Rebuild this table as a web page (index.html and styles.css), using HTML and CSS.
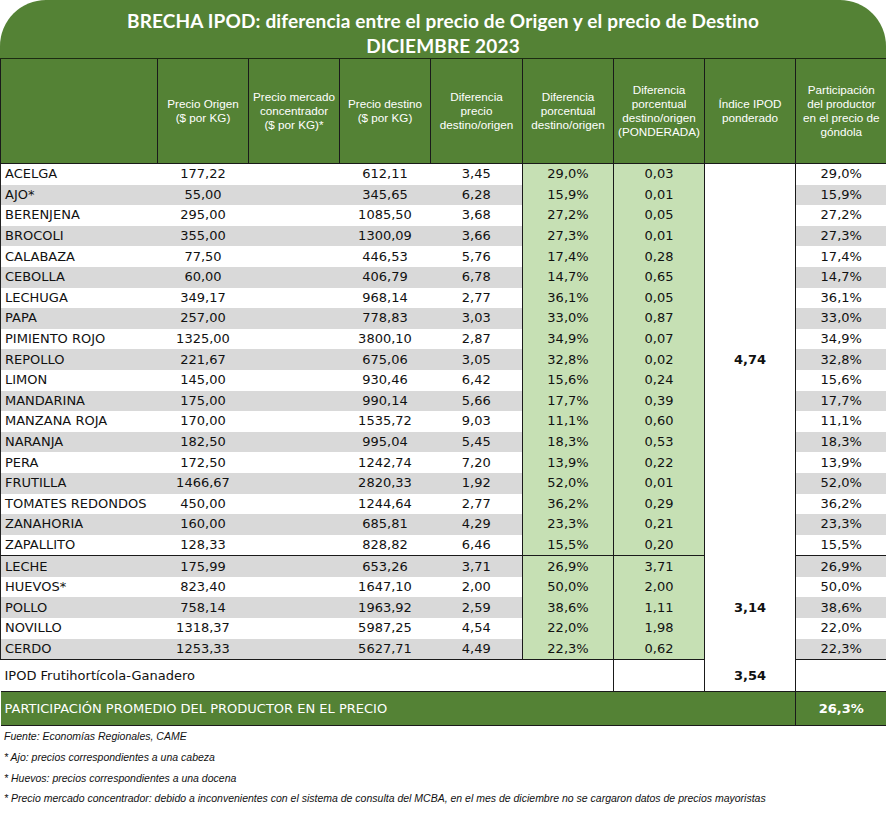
FILE: index.html
```html
<!DOCTYPE html>
<html lang="es">
<head>
<meta charset="utf-8">
<title>Brecha IPOD</title>
<link rel="stylesheet" href="styles.css">
</head>
<body>
<div class="sheet">
  <div class="title">
    <div>BRECHA IPOD: diferencia entre el precio de Origen y el precio de Destino</div>
    <div>DICIEMBRE 2023</div>
  </div>
  <table class="grid">
    <colgroup>
      <col class="c-name"><col class="c-n"><col class="c-n"><col class="c-n"><col class="c-w"><col class="c-n"><col class="c-n"><col class="c-n"><col class="c-n">
    </colgroup>
    <thead>
      <tr>
        <th class="first"></th>
        <th>Precio Origen<br>($ por KG)</th>
        <th>Precio mercado<br>concentrador<br>($ por KG)*</th>
        <th>Precio destino<br>($ por KG)</th>
        <th>Diferencia<br>precio<br>destino/origen</th>
        <th>Diferencia<br>porcentual<br>destino/origen</th>
        <th>Diferencia<br>porcentual<br>destino/origen<br>(PONDERADA)</th>
        <th>Índice IPOD<br>ponderado</th>
        <th>Participación<br>del productor<br>en el precio de<br>góndola</th>
      </tr>
    </thead>
    <tbody>
      <tr><td class="name">ACELGA</td><td>177,22</td><td></td><td>612,11</td><td>3,45</td><td class="g bl">29,0%</td><td class="g bl">0,03</td><td class="m bl" rowspan="19">4,74</td><td class="bl">29,0%</td></tr>
      <tr class="alt"><td class="name">AJO*</td><td>55,00</td><td></td><td>345,65</td><td>6,28</td><td class="g bl">15,9%</td><td class="g bl">0,01</td><td class="bl">15,9%</td></tr>
      <tr><td class="name">BERENJENA</td><td>295,00</td><td></td><td>1085,50</td><td>3,68</td><td class="g bl">27,2%</td><td class="g bl">0,05</td><td class="bl">27,2%</td></tr>
      <tr class="alt"><td class="name">BROCOLI</td><td>355,00</td><td></td><td>1300,09</td><td>3,66</td><td class="g bl">27,3%</td><td class="g bl">0,01</td><td class="bl">27,3%</td></tr>
      <tr><td class="name">CALABAZA</td><td>77,50</td><td></td><td>446,53</td><td>5,76</td><td class="g bl">17,4%</td><td class="g bl">0,28</td><td class="bl">17,4%</td></tr>
      <tr class="alt"><td class="name">CEBOLLA</td><td>60,00</td><td></td><td>406,79</td><td>6,78</td><td class="g bl">14,7%</td><td class="g bl">0,65</td><td class="bl">14,7%</td></tr>
      <tr><td class="name">LECHUGA</td><td>349,17</td><td></td><td>968,14</td><td>2,77</td><td class="g bl">36,1%</td><td class="g bl">0,05</td><td class="bl">36,1%</td></tr>
      <tr class="alt"><td class="name">PAPA</td><td>257,00</td><td></td><td>778,83</td><td>3,03</td><td class="g bl">33,0%</td><td class="g bl">0,87</td><td class="bl">33,0%</td></tr>
      <tr><td class="name">PIMIENTO ROJO</td><td>1325,00</td><td></td><td>3800,10</td><td>2,87</td><td class="g bl">34,9%</td><td class="g bl">0,07</td><td class="bl">34,9%</td></tr>
      <tr class="alt"><td class="name">REPOLLO</td><td>221,67</td><td></td><td>675,06</td><td>3,05</td><td class="g bl">32,8%</td><td class="g bl">0,02</td><td class="bl">32,8%</td></tr>
      <tr><td class="name">LIMON</td><td>145,00</td><td></td><td>930,46</td><td>6,42</td><td class="g bl">15,6%</td><td class="g bl">0,24</td><td class="bl">15,6%</td></tr>
      <tr class="alt"><td class="name">MANDARINA</td><td>175,00</td><td></td><td>990,14</td><td>5,66</td><td class="g bl">17,7%</td><td class="g bl">0,39</td><td class="bl">17,7%</td></tr>
      <tr><td class="name">MANZANA ROJA</td><td>170,00</td><td></td><td>1535,72</td><td>9,03</td><td class="g bl">11,1%</td><td class="g bl">0,60</td><td class="bl">11,1%</td></tr>
      <tr class="alt"><td class="name">NARANJA</td><td>182,50</td><td></td><td>995,04</td><td>5,45</td><td class="g bl">18,3%</td><td class="g bl">0,53</td><td class="bl">18,3%</td></tr>
      <tr><td class="name">PERA</td><td>172,50</td><td></td><td>1242,74</td><td>7,20</td><td class="g bl">13,9%</td><td class="g bl">0,22</td><td class="bl">13,9%</td></tr>
      <tr class="alt"><td class="name">FRUTILLA</td><td>1466,67</td><td></td><td>2820,33</td><td>1,92</td><td class="g bl">52,0%</td><td class="g bl">0,01</td><td class="bl">52,0%</td></tr>
      <tr><td class="name">TOMATES REDONDOS</td><td>450,00</td><td></td><td>1244,64</td><td>2,77</td><td class="g bl">36,2%</td><td class="g bl">0,29</td><td class="bl">36,2%</td></tr>
      <tr class="alt"><td class="name">ZANAHORIA</td><td>160,00</td><td></td><td>685,81</td><td>4,29</td><td class="g bl">23,3%</td><td class="g bl">0,21</td><td class="bl">23,3%</td></tr>
      <tr class="sep"><td class="name">ZAPALLITO</td><td>128,33</td><td></td><td>828,82</td><td>6,46</td><td class="g bl">15,5%</td><td class="g bl">0,20</td><td class="bl">15,5%</td></tr>
      <tr class="alt"><td class="name">LECHE</td><td>175,99</td><td></td><td>653,26</td><td>3,71</td><td class="g bl">26,9%</td><td class="g bl">3,71</td><td class="m bl" rowspan="5">3,14</td><td class="bl">26,9%</td></tr>
      <tr><td class="name">HUEVOS*</td><td>823,40</td><td></td><td>1647,10</td><td>2,00</td><td class="g bl">50,0%</td><td class="g bl">2,00</td><td class="bl">50,0%</td></tr>
      <tr class="alt"><td class="name">POLLO</td><td>758,14</td><td></td><td>1963,92</td><td>2,59</td><td class="g bl">38,6%</td><td class="g bl">1,11</td><td class="bl">38,6%</td></tr>
      <tr><td class="name">NOVILLO</td><td>1318,37</td><td></td><td>5987,25</td><td>4,54</td><td class="g bl">22,0%</td><td class="g bl">1,98</td><td class="bl">22,0%</td></tr>
      <tr class="alt sep"><td class="name">CERDO</td><td>1253,33</td><td></td><td>5627,71</td><td>4,49</td><td class="g bl">22,3%</td><td class="g bl">0,62</td><td class="bl">22,3%</td></tr>
      <tr class="total"><td class="label" colspan="6">IPOD Frutihortícola-Ganadero</td><td class="bl"></td><td class="m bl">3,54</td><td class="bl"></td></tr>
      <tr class="avg"><td class="label" colspan="8">PARTICIPACIÓN PROMEDIO DEL PRODUCTOR EN EL PRECIO</td><td class="m bl">26,3%</td></tr>
    </tbody>
  </table>
  <div class="notes">
    <p>Fuente: Economías Regionales, CAME</p>
    <p>* Ajo: precios correspondientes a una cabeza</p>
    <p>* Huevos: precios correspondientes a una docena</p>
    <p>* Precio mercado concentrador: debido a inconvenientes con el sistema de consulta del MCBA, en el mes de diciembre no se cargaron datos de precios mayoristas</p>
  </div>
</div>
</body>
</html>
```
FILE: styles.css
```css
body {
  margin: 0;
  background: #ffffff;
}

.sheet {
  width: 886px;
}

.title {
  background: #548235;
  color: #ffffff;
  border-radius: 46px 46px 0 0;
  box-sizing: content-box;
  height: 50px;
  padding-top: 8px;
  text-align: center;
  font-family: Lato, "Open Sans", sans-serif;
  font-weight: bold;
  font-size: 19px;
  letter-spacing: 0.15px;
  line-height: 25px;
  border-bottom: 1px solid #1c2b12;
}

.grid {
  width: 886px;
  table-layout: fixed;
  border-collapse: collapse;
  font-family: "DejaVu Sans", Verdana, sans-serif;
  font-size: 13px;
  color: #111111;
}

.c-name { width: 157px; }
.c-n { width: 91px; }
.c-w { width: 92px; }

.grid th {
  background: #548235;
  color: #ffffff;
  font-family: "Liberation Sans", Arial, sans-serif;
  font-weight: normal;
  font-size: 11.7px;
  line-height: 14px;
  height: 104px;
  padding: 0 2px;
  border-left: 1px solid #1a1a1a;
  border-bottom: 1px solid #1a1a1a;
  vertical-align: middle;
}

.grid td {
  height: 20.6px;
  padding: 0 4px;
  text-align: center;
  white-space: nowrap;
  line-height: 18px;
  background: #ffffff;
}

.grid td.name {
  text-align: left;
  border-left: 1px solid #222222;
}

.grid tr.alt td { background: #d9d9d9; }
.grid tr td.g { background: #c6e0b4; }
.grid tr td.m { background: #ffffff; font-weight: bold; }
.grid td.bl { border-left: 1px solid #1a1a1a; }
.grid tr.sep td { border-bottom: 1px solid #1a1a1a; }

.grid tr.total td {
  height: 31px;
  border-bottom: 1px solid #1a1a1a;
  background: #ffffff;
}

.grid td.label { text-align: left; }

.grid tr.avg td {
  height: 33px;
  background: #548235;
  color: #ffffff;
  border-bottom: 1px solid #1a1a1a;
}

.notes {
  padding: 0 4px;
  font-family: "Liberation Sans", Arial, sans-serif;
  font-style: italic;
  font-size: 10.5px;
  line-height: 20.7px;
  color: #111111;
}

.notes p { margin: 0; }
```
